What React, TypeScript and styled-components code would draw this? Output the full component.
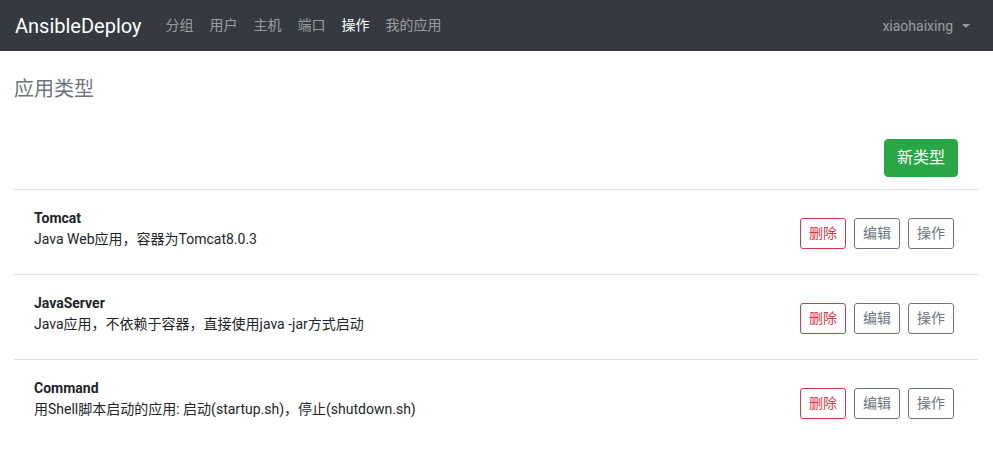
import React from 'react';
import styled, { createGlobalStyle } from 'styled-components';

const GlobalStyle = createGlobalStyle`
  * { box-sizing: border-box; }
  body {
    margin: 0;
    font-family: Roboto, "Noto Sans CJK SC", "Liberation Sans", sans-serif;
    color: #212529;
    background: #fff;
  }
`;

type AppType = { name: string; desc: string };

const types: AppType[] = [
  { name: 'Tomcat', desc: 'Java Web应用，容器为Tomcat8.0.3' },
  { name: 'JavaServer', desc: 'Java应用，不依赖于容器，直接使用java -jar方式启动' },
  { name: 'Command', desc: '用Shell脚本启动的应用: 启动(startup.sh)，停止(shutdown.sh)' },
];

const navItems = ['分组', '用户', '主机', '端口', '操作', '我的应用'];

function App() {
  return (
    <>
      <GlobalStyle />
      <Navbar>
        <Brand>AnsibleDeploy</Brand>
        <NavList>
          {navItems.map((item) => (
            <NavItem key={item} $active={item === '操作'}>
              {item}
            </NavItem>
          ))}
        </NavList>
        <UserMenu>xiaohaixing</UserMenu>
      </Navbar>
      <Page>
        <Heading>应用类型</Heading>
        <Toolbar>
          <PrimaryButton>新类型</PrimaryButton>
        </Toolbar>
        <List>
          {types.map((t) => (
            <Row key={t.name}>
              <Info>
                <Title>{t.name}</Title>
                <Desc>{t.desc}</Desc>
              </Info>
              <Actions>
                <SmallButton $variant="danger">删除</SmallButton>
                <SmallButton $variant="secondary">编辑</SmallButton>
                <SmallButton $variant="secondary">操作</SmallButton>
              </Actions>
            </Row>
          ))}
        </List>
      </Page>
    </>
  );
}

export default App;

const Navbar = styled.nav`
  display: flex;
  align-items: center;
  height: 51px;
  padding: 0 15px;
  background-color: #343a40;
`;

const Brand = styled.div`
  font-size: 20px;
  color: #fff;
  margin-right: 16px;
  line-height: 30px;
`;

const NavList = styled.div`
  display: flex;
  flex: 1;
`;

const NavItem = styled.a<{ $active?: boolean }>`
  padding: 0 8px;
  font-size: 14px;
  line-height: 21px;
  color: ${(p) => (p.$active ? '#fff' : 'rgba(255, 255, 255, 0.5)')};
  cursor: pointer;
`;

const UserMenu = styled.a`
  padding: 0 8px;
  font-size: 14px;
  color: rgba(255, 255, 255, 0.5);
  display: flex;
  align-items: center;

  &::after {
    content: '';
    display: inline-block;
    margin-left: 9px;
    border-top: 4px solid rgba(255, 255, 255, 0.5);
    border-left: 4px solid transparent;
    border-right: 4px solid transparent;
  }
`;

const Page = styled.div`
  padding: 0 15px 0 14px;
`;

const Heading = styled.h4`
  margin: 26px 0 0;
  font-size: 20px;
  font-weight: 400;
  line-height: 24px;
  color: #6c757d;
`;

const Toolbar = styled.div`
  display: flex;
  justify-content: flex-end;
  margin-top: 38px;
  margin-bottom: 12px;
  padding-right: 20px;
`;

const PrimaryButton = styled.button`
  font-family: inherit;
  font-size: 16px;
  line-height: 24px;
  padding: 6px 12px;
  color: #fff;
  background-color: #28a745;
  border: 1px solid #28a745;
  border-radius: 4px;
`;

const List = styled.div`
  display: flex;
  flex-direction: column;
`;

const Row = styled.div`
  display: flex;
  align-items: center;
  justify-content: space-between;
  padding: 21px 24px 21px 20px;
  border-top: 1px solid #dee2e6;
`;

const Info = styled.div`
  display: flex;
  flex-direction: column;
  font-size: 14px;
  line-height: 21px;
  margin: -3px 0 3px;
`;

const Title = styled.div`
  font-weight: 700;
`;

const Desc = styled.div``;

const Actions = styled.div`
  display: flex;
  gap: 8px;
  margin-top: 3px;
`;

const SmallButton = styled.button<{ $variant: 'danger' | 'secondary' }>`
  font-family: inherit;
  font-size: 14px;
  line-height: 21px;
  padding: 4px 8px;
  background: transparent;
  border-radius: 3px;
  color: ${(p) => (p.$variant === 'danger' ? '#dc3545' : '#6c757d')};
  border: 1px solid ${(p) => (p.$variant === 'danger' ? '#dc3545' : '#6c757d')};
`;
